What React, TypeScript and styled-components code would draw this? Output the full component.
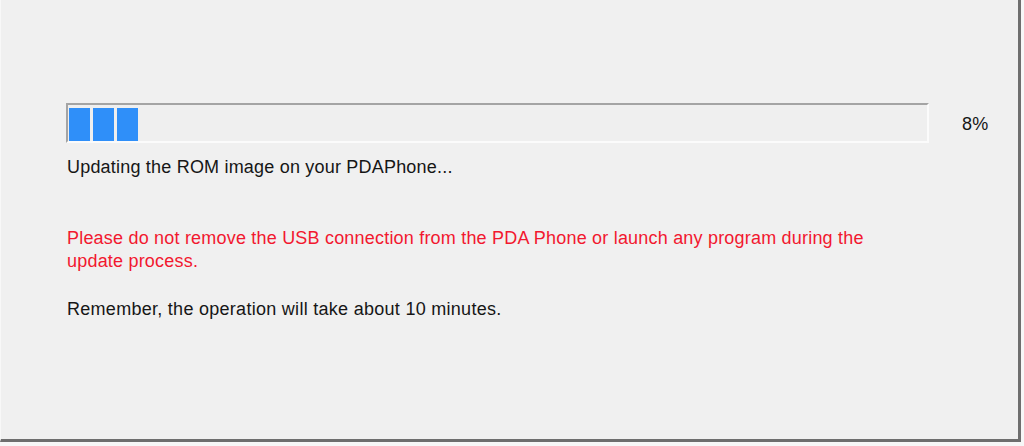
import React from "react";
import styled, { createGlobalStyle } from "styled-components";

const Global = createGlobalStyle`
  html, body { margin: 0; padding: 0; background: #f7f7f7; }
  body { font-family: "Liberation Sans", Arial, sans-serif; }
`;

const Window = styled.div`
  box-sizing: border-box;
  width: 1021px;
  height: 442px;
  background: #f0f0f0;
  border-right: 3px solid #6e6e6e;
  border-bottom: 3px solid #6e6e6e;
  border-left: 1px solid #f8f8f8;
  display: flex;
  flex-direction: column;
  padding: 103px 0 0 65px;
  font-size: 18px;
  letter-spacing: 0.2px;
  line-height: 23px;
  color: #161616;
`;

const ProgressRow = styled.div`
  display: flex;
  align-items: center;
  gap: 33px;
`;

const Bar = styled.div`
  width: 863px;
  height: 40px;
  box-sizing: border-box;
  border-top: 2px solid #a4a4a4;
  border-left: 2px solid #a4a4a4;
  border-bottom: 2px solid #fbfbfb;
  border-right: 2px solid #fbfbfb;
  background: #efefef;
  padding: 3px 0 0 1px;
  display: flex;
  gap: 3px;
`;

const Block = styled.div`
  width: 21px;
  background: #2f8ff9;
`;

const Percent = styled.span`
  letter-spacing: 0.3px;
  padding-top: 3px;
`;

const Status = styled.p`
  margin: 13px 0 0 1px;
`;

const Warning = styled.p`
  margin: 48px 0 0 1px;
  color: #f2182f;
  width: 830px;
`;

const Note = styled.p`
  margin: 25px 0 0 1px;
  letter-spacing: 0.28px;
`;

export default function App() {
  const blocks = [0, 1, 2];
  return (
    <>
      <Global />
      <Window>
        <ProgressRow>
          <Bar>
            {blocks.map((b) => (
              <Block key={b} />
            ))}
          </Bar>
          <Percent>8%</Percent>
        </ProgressRow>
        <Status>Updating the ROM image on your PDAPhone...</Status>
        <Warning>
          Please do not remove the USB connection from the PDA Phone or launch any program during the update process.
        </Warning>
        <Note>Remember, the operation will take about 10 minutes.</Note>
      </Window>
    </>
  );
}
